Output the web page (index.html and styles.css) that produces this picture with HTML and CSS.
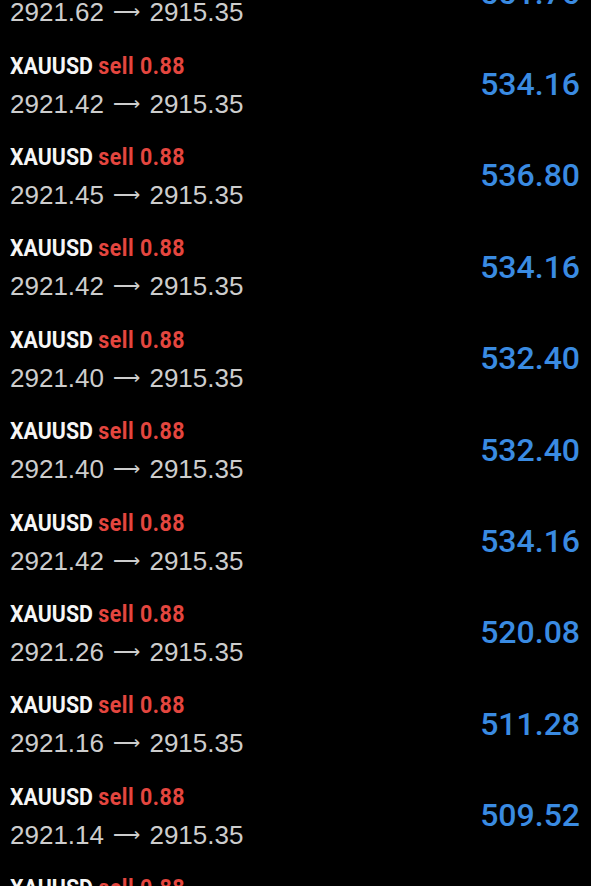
FILE: index.html
```html
<!DOCTYPE html>
<html lang="en">
<head>
    <meta charset="UTF-8">
    <meta name="viewport" content="width=device-width, initial-scale=1.0">
    <title>Trades</title>
    <link rel="stylesheet" href="styles.css">
</head>
<body>
    <div class="list">
    </div>

    <script>
        let close = 2915.35;
        let lots = 0.88;
        let opens = [2921.62, 2921.42, 2921.45, 2921.42, 2921.40, 2921.40, 2921.42, 2921.26, 2921.16, 2921.14, 2921.12];

        let list = document.querySelector(".list");
        // 渲染每一行
        function render(data){
            let str = "";
            data.forEach((open)=>{
                let profit = (open - close) * lots * 100;
                str += `
                    <div class="row">
                        <div class="info">
                            <div class="title">
                                <span class="symbol">XAUUSD</span> <span class="side">sell ${lots.toFixed(2)}</span>
                            </div>
                            <div class="price">${open.toFixed(2)} <span class="arrow">⟶</span> ${close.toFixed(2)}</div>
                        </div>
                        <div class="profit">${profit.toFixed(2)}</div>
                    </div>
                `;
            });
            list.innerHTML = str;
        }
        render(opens);
    </script>
</body>
</html>
```

FILE: styles.css
```css
* {
    margin: 0;
    padding: 0;
    box-sizing: border-box;
}

body {
    background: #000;
    overflow: hidden;
}

.list {
    margin-top: -53px;
}

.row {
    height: 91.4px;
    display: flex;
    align-items: center;
    justify-content: space-between;
    padding: 0 11px 0 10px;
}

.info {
    margin-bottom: 4px;
}

.title {
    font-family: Roboto, "Liberation Sans", sans-serif;
    font-weight: 700;
    font-size: 24px;
    line-height: 42px;
    white-space: nowrap;
    transform: scaleX(0.89);
    transform-origin: left center;
}

.symbol {
    color: #f6f6f6;
}

.side {
    color: #e4463f;
    letter-spacing: 0.6px;
}

.price {
    font-family: "Liberation Sans", Arial, sans-serif;
    font-size: 26px;
    line-height: 32px;
    color: #cdcdcd;
    white-space: nowrap;
}

.arrow {
    font-family: "DejaVu Sans", sans-serif;
    font-weight: 200;
    font-size: 19px;
    margin: 0 2px;
    vertical-align: 3px;
}

.profit {
    font-family: Roboto, "Liberation Sans", sans-serif;
    font-weight: 500;
    font-size: 32px;
    line-height: 32px;
    color: #3a8be2;
}
```
